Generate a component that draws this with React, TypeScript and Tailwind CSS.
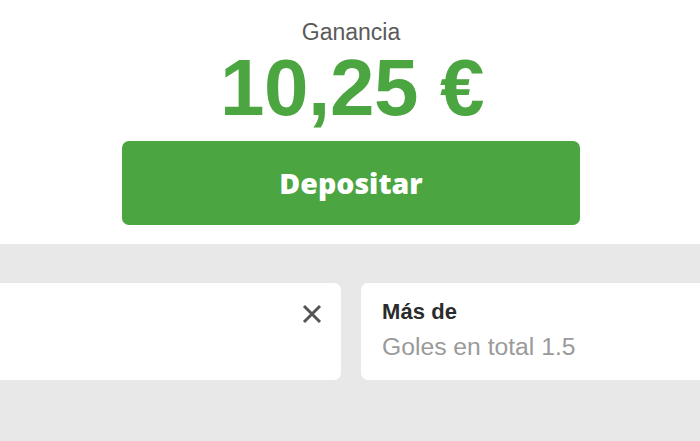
export default function App() {
  return (
    <div className="w-[700px] h-[441px] overflow-hidden bg-[#e8e8e8]" style={{ fontFamily: '"Liberation Sans", Arial, sans-serif' }}>
      {/* Winnings header */}
      <div className="h-[244px] bg-white flex flex-col items-center pt-[19px]">
        <p className="text-[23px] leading-[26px] text-[#5a5a5a] ml-[2px]">Ganancia</p>
        <p className="text-[80px] leading-[80px] font-bold text-[#4ba540] tracking-[-0.4px] ml-[4px] mt-[3px]">10,25 €</p>
        <button
          className="mt-[13px] ml-[2px] w-[458px] h-[84px] rounded-[7px] bg-[#4ba540] text-white text-[28.5px] font-extrabold"
          style={{ fontFamily: '"Open Sans", sans-serif' }}
        >
          Depositar
        </button>
      </div>

      {/* Bet cards */}
      <div className="flex gap-5 pt-[39px] ml-[-40px]">
        <div className="w-[381px] h-[97px] shrink-0 bg-white rounded-[7px] flex justify-end items-start pt-[21px] pr-[19px]">
          <svg width="20" height="20" viewBox="0 0 20 20" className="text-[#555]">
            <path d="M2 2L18 18M18 2L2 18" stroke="currentColor" strokeWidth="3" />
          </svg>
        </div>
        <div className="w-[381px] h-[97px] shrink-0 bg-white rounded-[7px] pl-[21px] pt-[16px]">
          <p className="text-[22px] leading-[25px] font-bold text-[#2b2b2b] tracking-[0.1px]">Más de</p>
          <p className="text-[24.7px] leading-[28px] text-[#9a9a9a] mt-[9px]">Goles en total 1.5</p>
        </div>
      </div>
    </div>
  );
}
